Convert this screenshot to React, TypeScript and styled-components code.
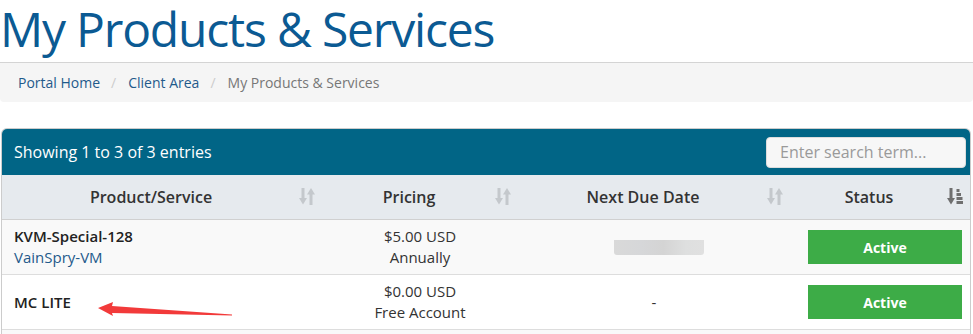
import React from 'react';
import styled, { createGlobalStyle } from 'styled-components';

const COLUMNS = '320px 196px 272px 1fr';

const GlobalStyle = createGlobalStyle`
    body {
        margin: 0;
        background: #fff;
        font-family: 'Open Sans', 'DejaVu Sans', sans-serif;
        color: #333;
    }
`;

const Page = styled.div`
    position: relative;
    width: 973px;
    padding-top: 2px;
`;

const Title = styled.h1`
    margin: 0 0 7px 0;
    font-size: 48px;
    line-height: 53px;
    font-weight: 400;
    color: #0b5a93;
    letter-spacing: -1.2px;
    white-space: nowrap;
`;

const Breadcrumb = styled.ol`
    display: flex;
    list-style: none;
    margin: 0 0 26px 0;
    padding: 10px 18px 9px;
    border-top: 1px solid #d4d4d4;
    background: #f5f5f5;
    border-radius: 0 0 4px 4px;
    font-size: 14px;
    line-height: 20px;
`;

const Crumb = styled.li<{ active?: boolean }>`
    color: ${props => (props.active ? '#777' : '#1f5a8b')};

    &:not(:first-child)::before {
        content: '/';
        padding: 0 12px 0 11px;
        color: #ccc;
    }
`;

const Panel = styled.div`
    margin-left: 1px;
    width: 970px;
    box-sizing: border-box;
    border: 1px solid #ccc;
    border-bottom: none;
    border-radius: 6px 6px 0 0;
    overflow: hidden;
`;

const PanelHeader = styled.div`
    display: flex;
    align-items: center;
    justify-content: space-between;
    height: 46px;
    padding: 0 4px 0 12px;
    background: #016586;
    color: #fff;
    font-size: 16px;
`;

const Search = styled.input`
    width: 200px;
    height: 31px;
    box-sizing: border-box;
    border: 1px solid #ddd;
    border-radius: 4px;
    background: #f7f7f7;
    padding: 0 13px;
    font-family: inherit;
    font-size: 16px;
    color: #555;

    &::placeholder {
        color: #9a9a9a;
    }
`;

const HeadRow = styled.div`
    display: grid;
    grid-template-columns: ${COLUMNS};
    height: 44px;
    background: #e6eaee;
    border-bottom: 1px solid #d0d0d0;
`;

const HeadCell = styled.div`
    position: relative;
    display: flex;
    align-items: center;
    justify-content: center;
    padding: 0 30px 0 8px;
    font-size: 16px;
    font-weight: 600;
    color: #333;
`;

const SortIcon = styled.svg<{ active?: boolean }>`
    position: absolute;
    right: 7px;
    top: 13px;
    width: 16px;
    height: 17px;
    fill: ${props => (props.active ? '#6f6f6f' : '#c4c8cc')};
`;

const Row = styled.div<{ striped?: boolean }>`
    position: relative;
    display: grid;
    grid-template-columns: ${COLUMNS};
    height: 55px;
    box-sizing: border-box;
    border-bottom: 1px solid #ddd;
    background: ${props => (props.striped ? '#f9f9f9' : '#fff')};
    font-size: 15px;
    line-height: 21px;
`;

const Cell = styled.div<{ align?: 'left' | 'center' }>`
    display: flex;
    flex-direction: column;
    justify-content: center;
    align-items: ${props => (props.align === 'left' ? 'flex-start' : 'center')};
    padding: 0 12px;
    color: #333;
`;

const ProductName = styled.strong`
    font-weight: 600;
    color: #222;
`;

const Domain = styled.span`
    color: #1f5a8b;
`;

const Blurred = styled.div`
    width: 90px;
    height: 15px;
    margin-left: 10px;
    border-radius: 0 0 3px 3px;
    background: linear-gradient(90deg, #d9d9d9 0%, #d6d7d9 30%, #d4d4d4 55%, #dedfdf 80%, #e0e0e0 100%);
`;

const StatusCell = styled.div`
    display: flex;
    align-items: center;
    padding: 0 8px 0 18px;
`;

const StatusLabel = styled.span`
    display: flex;
    align-items: center;
    justify-content: center;
    width: 154px;
    height: 34px;
    background: #3dac47;
    color: #fff;
    font-size: 14px;
    font-weight: 700;
`;

const Pointer = styled.svg`
    position: absolute;
    left: 90px;
    top: 298px;
    width: 150px;
    height: 24px;
`;

const Unsorted = () => (
    <SortIcon viewBox="0 0 16 17">
        <rect x="2.5" y="0" width="3" height="11" />
        <polygon points="0,10 8,10 4,16.5" />
        <rect x="10.5" y="6" width="3" height="11" />
        <polygon points="8,6.5 16,6.5 12,0" />
    </SortIcon>
);

const SortedAsc = () => (
    <SortIcon viewBox="0 0 16 17" active>
        <rect x="2.5" y="0" width="3" height="11" />
        <polygon points="0,10 8,10 4,16.5" />
        <rect x="9.5" y="1" width="3" height="3" />
        <rect x="9.5" y="5" width="4.5" height="3" />
        <rect x="9.5" y="9" width="6" height="3" />
        <rect x="9.5" y="13" width="7" height="3" />
    </SortIcon>
);

const rows = [
    { name: 'KVM-Special-128', domain: 'VainSpry-VM', price: '$5.00 USD', cycle: 'Annually', due: null },
    { name: 'MC LITE', domain: '', price: '$0.00 USD', cycle: 'Free Account', due: '-' },
];

const App = () => (
    <Page>
        <GlobalStyle />
        <Title>My Products &amp; Services</Title>
        <Breadcrumb>
            <Crumb>Portal Home</Crumb>
            <Crumb>Client Area</Crumb>
            <Crumb active>My Products &amp; Services</Crumb>
        </Breadcrumb>
        <Panel>
            <PanelHeader>
                <span>Showing 1 to 3 of 3 entries</span>
                <Search placeholder="Enter search term..." />
            </PanelHeader>
            <HeadRow>
                <HeadCell>
                    Product/Service
                    <Unsorted />
                </HeadCell>
                <HeadCell>
                    Pricing
                    <Unsorted />
                </HeadCell>
                <HeadCell>
                    Next Due Date
                    <Unsorted />
                </HeadCell>
                <HeadCell>
                    Status
                    <SortedAsc />
                </HeadCell>
            </HeadRow>
            {rows.map((row, i) => (
                <Row key={row.name} striped={i % 2 === 0}>
                    <Cell align="left">
                        <ProductName>{row.name}</ProductName>
                        {row.domain && <Domain>{row.domain}</Domain>}
                    </Cell>
                    <Cell>
                        <span>{row.price}</span>
                        <span>{row.cycle}</span>
                    </Cell>
                    <Cell>{row.due ?? <Blurred />}</Cell>
                    <StatusCell>
                        <StatusLabel>Active</StatusLabel>
                    </StatusCell>
                </Row>
            ))}
            <Row striped />
        </Panel>
        {/* red annotation arrow pointing at the free plan */}
        <Pointer viewBox="0 0 150 24">
            <polygon
                points="8,10 23,4 22,8 142,16.6 142,17.4 22,15 23,18"
                fill="#f23a3a"
            />
        </Pointer>
    </Page>
);

export default App;
